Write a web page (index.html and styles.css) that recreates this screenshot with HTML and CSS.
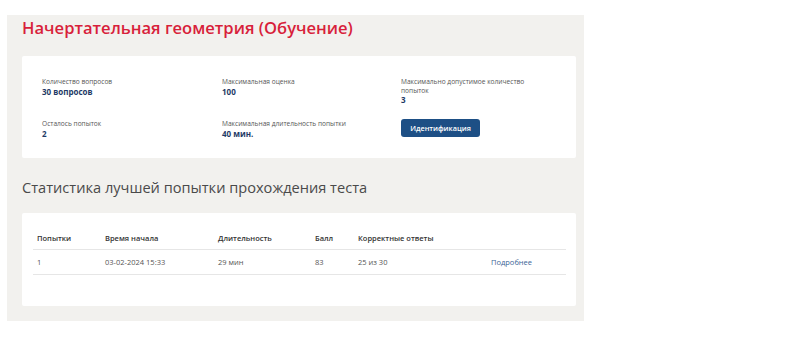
FILE: index.html
```html
<!DOCTYPE html>
<html lang="ru">
<head>
  <meta charset="UTF-8">
  <title>Начертательная геометрия (Обучение)</title>
  <link rel="stylesheet" href="styles.css">
</head>
<body>
  <div class="panel">
    <h1 class="test-title">Начертательная геометрия (Обучение)</h1>

    <div class="card info-card">
      <div class="info-item">
        <div class="info-label">Количество вопросов</div>
        <div class="info-value">30 вопросов</div>
      </div>
      <div class="info-item">
        <div class="info-label">Максимальная оценка</div>
        <div class="info-value">100</div>
      </div>
      <div class="info-item">
        <div class="info-label narrow">Максимально допустимое количество попыток</div>
        <div class="info-value">3</div>
      </div>
      <div class="info-item">
        <div class="info-label">Осталось попыток</div>
        <div class="info-value">2</div>
      </div>
      <div class="info-item">
        <div class="info-label">Максимальная длительность попытки</div>
        <div class="info-value">40 мин.</div>
      </div>
      <div class="info-item">
        <button class="ident-button">Идентификация</button>
      </div>
    </div>

    <h2 class="section-title">Статистика лучшей попытки прохождения теста</h2>

    <div class="card table-card">
      <table class="stats-table">
        <thead>
          <tr>
            <th class="col-try">Попытки</th>
            <th class="col-start">Время начала</th>
            <th class="col-dur">Длительность</th>
            <th class="col-score">Балл</th>
            <th class="col-correct">Корректные ответы</th>
            <th class="col-more"></th>
          </tr>
        </thead>
        <tbody>
          <tr>
            <td>1</td>
            <td>03-02-2024 15:33</td>
            <td>29 мин</td>
            <td>83</td>
            <td>25 из 30</td>
            <td><a href="#" class="more-link">Подробнее</a></td>
          </tr>
        </tbody>
      </table>
    </div>
  </div>
</body>
</html>
```

FILE: styles.css
```css
/* Base */
* {
  margin: 0;
  padding: 0;
  box-sizing: border-box;
}

body {
  font-family: 'Open Sans', 'Liberation Sans', sans-serif;
  background: #fff;
  color: #333;
}

/* Grey page panel */
.panel {
  margin: 15px 0 0 7px;
  width: 577px;
  background: #f2f1ee;
  padding: 0 8px 15px 15px;
}

.test-title {
  font-size: 16.6px;
  font-weight: 600;
  line-height: 26px;
  color: #d81f3b;
  margin-bottom: 15px;
}

/* White cards */
.card {
  background: #fff;
  border-radius: 2px;
}

.info-card {
  height: 102px;
  padding: 22px 20px 0 20px;
  display: grid;
  grid-template-columns: 180px 179px 1fr;
  align-content: start;
  align-items: start;
  row-gap: 15px;
}

.info-label {
  font-size: 6.6px;
  line-height: 8.5px;
  color: #555;
}

.info-label.narrow {
  max-width: 135px;
}

.info-value {
  font-size: 8px;
  line-height: 10px;
  font-weight: 700;
  color: #1e3a66;
}

.ident-button {
  display: block;
  font-family: inherit;
  font-size: 7.3px;
  font-weight: 600;
  color: #fff;
  background: #1d4f85;
  border: none;
  border-radius: 3px;
  width: 79px;
  height: 18px;
  margin-top: -1px;
}

/* Statistics */
.section-title {
  font-size: 14.6px;
  font-weight: 400;
  line-height: 20px;
  color: #4a4a4a;
  margin: 19px 0 16px;
}

.table-card {
  height: 93px;
  padding: 13px 10px 0 11px;
}

.stats-table {
  width: 533px;
  border-collapse: collapse;
  font-size: 7.5px;
  color: #555;
}

.stats-table th,
.stats-table td {
  text-align: left;
  padding: 0 0 0 4px;
}

.stats-table th {
  height: 23px;
  font-weight: 600;
  color: #333;
  border-bottom: 1px solid #e6e6e6;
  padding-top: 1px;
}

.stats-table td {
  height: 25px;
  border-bottom: 1px solid #e6e6e6;
}

.col-try { width: 68px; }
.col-start { width: 113px; }
.col-dur { width: 97px; }
.col-score { width: 43px; }
.col-correct { width: 133px; }

.more-link {
  color: #3b6596;
  text-decoration: none;
}
```
